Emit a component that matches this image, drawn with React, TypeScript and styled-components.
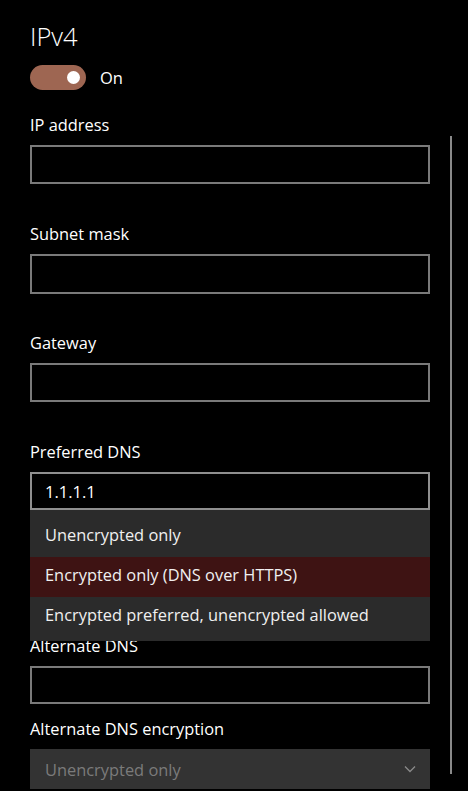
import React from "react";
import styled, { createGlobalStyle } from "styled-components";

const Global = createGlobalStyle`
  html, body { margin: 0; padding: 0; background: #000; }
  body { font-family: "Open Sans", "Noto Sans", sans-serif; color: #fff; }
`;

const Page = styled.div`
  position: relative;
  width: 468px;
  height: 791px;
  overflow: hidden;
  background: #000;
  padding: 19px 0 0 30px;
  box-sizing: border-box;
`;

const Column = styled.div`
  width: 400px;
  display: flex;
  flex-direction: column;
`;

const Title = styled.h2`
  margin: 0;
  font-size: 25.5px;
  font-weight: 300;
  line-height: 34px;
  color: #fff;
`;

const ToggleRow = styled.div`
  display: flex;
  align-items: center;
  gap: 14px;
  margin-top: 12px;
  height: 25px;
`;

const Switch = styled.div`
  width: 56px;
  height: 25px;
  border-radius: 13px;
  background: #9e6652;
  display: flex;
  align-items: center;
  justify-content: flex-end;
  padding-right: 6px;
  box-sizing: border-box;
`;

const Knob = styled.span`
  width: 13px;
  height: 13px;
  border-radius: 50%;
  background: #fff;
`;

const SwitchLabel = styled.span`
  font-size: 16.5px;
  line-height: 22px;
`;

const Field = styled.div<{ $mt: number; $covered?: boolean }>`
  position: relative;
  margin-top: ${(p) => p.$mt}px;
  display: flex;
  flex-direction: column;
  visibility: ${(p) => (p.$covered ? "hidden" : "visible")};
`;

const Label = styled.label`
  font-size: 16.4px;
  line-height: 22px;
  margin-bottom: 9px;
  color: #fff;
`;

const Input = styled.div<{ $h?: number; $hover?: boolean }>`
  height: ${(p) => p.$h ?? 39}px;
  box-sizing: border-box;
  border: 2px solid ${(p) => (p.$hover ? "#8f8f8f" : "#7a7a7a")};
  background: #000;
  padding: 0 13px;
  display: flex;
  align-items: center;
  font-size: 16.5px;
  color: #fff;
`;

const Select = styled.div`
  height: 40px;
  box-sizing: border-box;
  background: #333;
  padding: 0 14px 0 15px;
  display: flex;
  align-items: center;
  justify-content: space-between;
  font-size: 16.4px;
  color: #7b7b7b;
`;

const Menu = styled.div`
  position: absolute;
  top: 100%;
  left: 0;
  width: 400px;
  background: #2b2b2b;
  padding: 7px 0 4px;
  z-index: 2;
  visibility: visible;
`;

const MenuItem = styled.div<{ $active?: boolean }>`
  height: 40px;
  box-sizing: border-box;
  display: flex;
  align-items: center;
  padding: 0 0 6px 15px;
  font-size: 16.4px;
  color: #f0f0f0;
  background: ${(p) => (p.$active ? "#3e1313" : "transparent")};
`;

const Scrollbar = styled.div`
  position: absolute;
  left: 450px;
  top: 136px;
  width: 2px;
  height: 638px;
  background: #8a8a8a;
`;

const Chevron = () => (
  <svg width="12" height="8" viewBox="0 0 12 8">
    <path d="M1 1.5 L6 6.5 L11 1.5" fill="none" stroke="#8a8a8a" strokeWidth="1.3" />
  </svg>
);

export default function App() {
  return (
    <>
      <Global />
      <Page>
        <Column>
          <Title>IPv4</Title>
          <ToggleRow>
            <Switch>
              <Knob />
            </Switch>
            <SwitchLabel>On</SwitchLabel>
          </ToggleRow>
          <Field $mt={24}>
            <Label>IP address</Label>
            <Input />
          </Field>
          <Field $mt={39}>
            <Label>Subnet mask</Label>
            <Input $h={40} />
          </Field>
          <Field $mt={38}>
            <Label>Gateway</Label>
            <Input />
          </Field>
          <Field $mt={39}>
            <Label>Preferred DNS</Label>
            <Input $h={38} $hover>1.1.1.1</Input>
            <Menu>
              <MenuItem>Unencrypted only</MenuItem>
              <MenuItem $active>Encrypted only (DNS over HTTPS)</MenuItem>
              <MenuItem>Encrypted preferred, unencrypted allowed</MenuItem>
            </Menu>
          </Field>
          <Field $mt={38} $covered>
            <Label>Preferred DNS encryption</Label>
            <Select>
              <span>Unencrypted only</span>
              <Chevron />
            </Select>
          </Field>
          <Field $mt={16}>
            <Label>Alternate DNS</Label>
            <Input $h={38} />
          </Field>
          <Field $mt={14}>
            <Label>Alternate DNS encryption</Label>
            <Select>
              <span>Unencrypted only</span>
              <Chevron />
            </Select>
          </Field>
        </Column>
        <Scrollbar />
      </Page>
    </>
  );
}
